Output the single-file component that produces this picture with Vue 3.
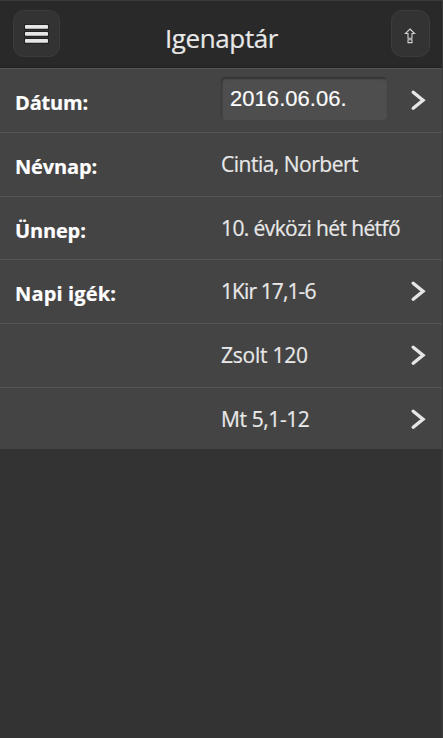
<script setup>
const rows = [
  { label: 'Dátum:', value: '2016.06.06.', kind: 'date', input: true, link: true },
  { label: 'Névnap:', value: 'Cintia, Norbert', kind: 'nameday' },
  { label: 'Ünnep:', value: '10. évközi hét hétfő', kind: 'feast' },
  { label: 'Napi igék:', value: '1Kir 17,1-6', kind: 'first', link: true },
  { label: '', value: 'Zsolt 120', kind: 'psalm', link: true },
  { label: '', value: 'Mt 5,1-12', kind: 'gospel', link: true },
]
</script>

<template>
  <div class="screen">
    <header class="bar">
      <button class="btn menu" aria-label="Menü">
        <svg width="26" height="22" viewBox="0 0 26 22">
          <g fill="#222">
            <rect x="1" y="1" width="25" height="6" rx="1" />
            <rect x="1" y="8" width="25" height="6" rx="1" />
            <rect x="1" y="15" width="25" height="6" rx="1" />
          </g>
          <g fill="#e6e6e6">
            <rect x="2" y="2" width="23" height="3.8" rx="0.7" />
            <rect x="2" y="9" width="23" height="3.8" rx="0.7" />
            <rect x="2" y="16" width="23" height="3.8" rx="0.7" />
          </g>
        </svg>
      </button>
      <h1><span>Igenaptár</span></h1>
      <button class="btn share" aria-label="Megosztás">
        <svg width="12" height="16" viewBox="0 0 12 16" fill="none" stroke="#d2d2d2" stroke-width="1.1">
          <path d="M6 1 L10.6 5.5 H8 V10.3 H4 V5.5 H1.4 Z" />
          <path d="M4 11.8 H8 V14.6 H4 Z" />
        </svg>
      </button>
    </header>
    <main class="list">
      <section v-for="r in rows" :key="r.kind" class="row" :class="r.kind">
        <strong class="label"><span>{{ r.label }}</span></strong>
        <div class="value" :class="{ field: r.input }"><span>{{ r.value }}</span></div>
        <svg v-if="r.link" class="chevron" width="18" height="22" viewBox="0 0 18 22">
          <path d="M3.2 3.2 L13 11.2 L3.2 19.2" fill="none" stroke="#e6e6e6" stroke-width="3.4" stroke-linecap="round" />
        </svg>
      </section>
    </main>
  </div>
</template>

<style>
body { margin: 0; background: #333; }
</style>
<style scoped>
.screen {
  box-sizing: border-box;
  width: 443px;
  height: 738px;
  overflow: hidden;
  background: #333;
  color: #e8e8e8;
  font-family: "Open Sans", "Noto Sans", sans-serif;
  border-right: 1px solid #3b3b3b;
}
.bar {
  box-sizing: border-box;
  height: 68px;
  display: grid;
  grid-template-columns: 47px 1fr 39px;
  align-items: start;
  padding: 9px 12px 0 13px;
  background: #292929;
  border-top: 1px solid #3a3a3a;
  border-bottom: 1px solid #202020;
}
.btn {
  box-sizing: border-box;
  display: flex;
  align-items: center;
  justify-content: center;
  height: 47px;
  padding: 0;
  background: #333;
  border: 1px solid #3c3c3c;
  border-radius: 11px;
}
.menu { padding-right: 2px; }
.share { padding: 4px 2px 0 0; }
h1 {
  margin: 10px 0 0;
  padding-left: 105px;
  font-size: 26px;
  line-height: 36px;
  font-weight: 400;
  letter-spacing: -0.4px;
  white-space: nowrap;
  -webkit-text-stroke: 0.2px #e8e8e8;
}
.list {
  display: grid;
  grid-template-rows: 64px 64px 63px 64px 64px 62px;
}
.row {
  box-sizing: border-box;
  display: grid;
  grid-template-columns: 206px 166px 1fr;
  align-items: start;
  padding-left: 15px;
  background: #444;
  border-top: 1px solid #555;
}
.label {
  padding-top: 20px;
  color: #fff;
  font-size: 20px;
  line-height: 28px;
  font-weight: 700;
  letter-spacing: -0.15px;
  -webkit-text-stroke: 0.2px #fff;
}
.first .label { letter-spacing: 0.15px; }
.value {
  padding-top: 16px;
  font-size: 21px;
  line-height: 30px;
  letter-spacing: -0.5px;
  white-space: nowrap;
  -webkit-text-stroke: 0.2px #e8e8e8;
}
.feast .value { letter-spacing: -0.6px; }
.first .value { letter-spacing: -0.9px; }
.psalm .value { letter-spacing: -0.25px; }
.gospel .value { letter-spacing: -0.4px; }
.value.field {
  box-sizing: border-box;
  height: 43px;
  margin-top: 8px;
  padding: 6px 0 0 9px;
  background: #4e4e4e;
  border-radius: 4px;
  box-shadow: inset 1px 2px 2px #333;
  color: #fff;
  font: 22px/32px "Liberation Sans", Arial, sans-serif;
  letter-spacing: 0.05px;
}
.chevron { margin: 20px 0 0 23px; }
</style>
